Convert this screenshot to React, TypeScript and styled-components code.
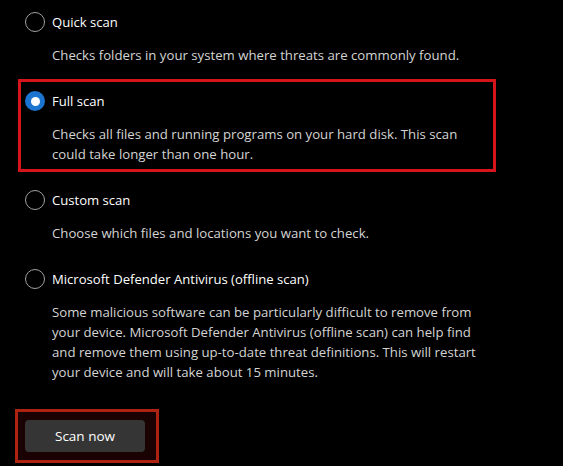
import React from "react";
import styled, { createGlobalStyle } from "styled-components";

const Global = createGlobalStyle`
  html, body { margin: 0; padding: 0; background: #000; }
  body { font-family: "Open Sans", "Noto Sans", sans-serif; }
`;

const Page = styled.div`
  width: 563px;
  height: 466px;
  background: #000;
  box-sizing: border-box;
  padding: 11px 0 0 25px;
  display: flex;
  flex-direction: column;
  overflow: hidden;
`;

const Options = styled.div`
  display: flex;
  flex-direction: column;
  gap: 25px;
`;

const Option = styled.div`
  position: relative;
  display: flex;
  flex-direction: column;
  gap: 12px;
`;

const TitleRow = styled.label`
  display: flex;
  align-items: center;
  gap: 7px;
  height: 22px;
  font-size: 13.1px;
  color: #fff;
  cursor: pointer;
`;

const Radio = styled.span<{ $checked?: boolean }>`
  box-sizing: border-box;
  width: 20px;
  height: 20px;
  border-radius: 50%;
  flex: none;
  display: flex;
  align-items: center;
  justify-content: center;
  border: ${(p) => (p.$checked ? "none" : "1px solid #a0a0a0")};
  background: ${(p) => (p.$checked ? "#1a74d0" : "transparent")};
  &::after {
    content: "";
    display: ${(p) => (p.$checked ? "block" : "none")};
    width: 9px;
    height: 9px;
    border-radius: 50%;
    background: #fff;
  }
`;

const Desc = styled.p`
  margin: 0 0 0 27px;
  font-size: 13.2px;
  line-height: 20px;
  color: #d4d4d4;
`;

const Highlight = styled.div`
  position: absolute;
  left: -7px;
  top: -11px;
  width: 478px;
  height: 93px;
  box-sizing: border-box;
  border: 3px solid #d5141c;
  pointer-events: none;
`;

const ButtonArea = styled.div`
  margin: 27px 0 0 -10px;
  width: 144px;
  height: 54px;
  box-sizing: border-box;
  border: 3px solid rgba(200, 40, 20, 0.85);
  background: #1a0202;
  display: flex;
  align-items: center;
  padding-left: 7px;
`;

const ScanButton = styled.button`
  width: 120px;
  height: 32px;
  border: none;
  border-radius: 4px;
  background: #353535;
  color: #fff;
  font-family: inherit;
  font-size: 13.5px;
  cursor: pointer;
`;

type Item = { title: string; lines: string[]; checked?: boolean; highlight?: boolean };

const items: Item[] = [
  { title: "Quick scan", lines: ["Checks folders in your system where threats are commonly found."] },
  {
    title: "Full scan",
    checked: true,
    highlight: true,
    lines: [
      "Checks all files and running programs on your hard disk. This scan",
      "could take longer than one hour.",
    ],
  },
  { title: "Custom scan", lines: ["Choose which files and locations you want to check."] },
  {
    title: "Microsoft Defender Antivirus (offline scan)",
    lines: [
      "Some malicious software can be particularly difficult to remove from",
      "your device. Microsoft Defender Antivirus (offline scan) can help find",
      "and remove them using up-to-date threat definitions. This will restart",
      "your device and will take about 15 minutes.",
    ],
  },
];

export default function App() {
  return (
    <>
      <Global />
      <Page>
        <Options>
          {items.map((it) => (
            <Option key={it.title}>
              <TitleRow>
                <Radio $checked={it.checked} />
                {it.title}
              </TitleRow>
              <Desc>
                {it.lines.map((l, i) => (
                  <React.Fragment key={i}>
                    {i > 0 && <br />}
                    {l}
                  </React.Fragment>
                ))}
              </Desc>
              {it.highlight && <Highlight />}
            </Option>
          ))}
        </Options>
        <ButtonArea>
          <ScanButton>Scan now</ScanButton>
        </ButtonArea>
      </Page>
    </>
  );
}
